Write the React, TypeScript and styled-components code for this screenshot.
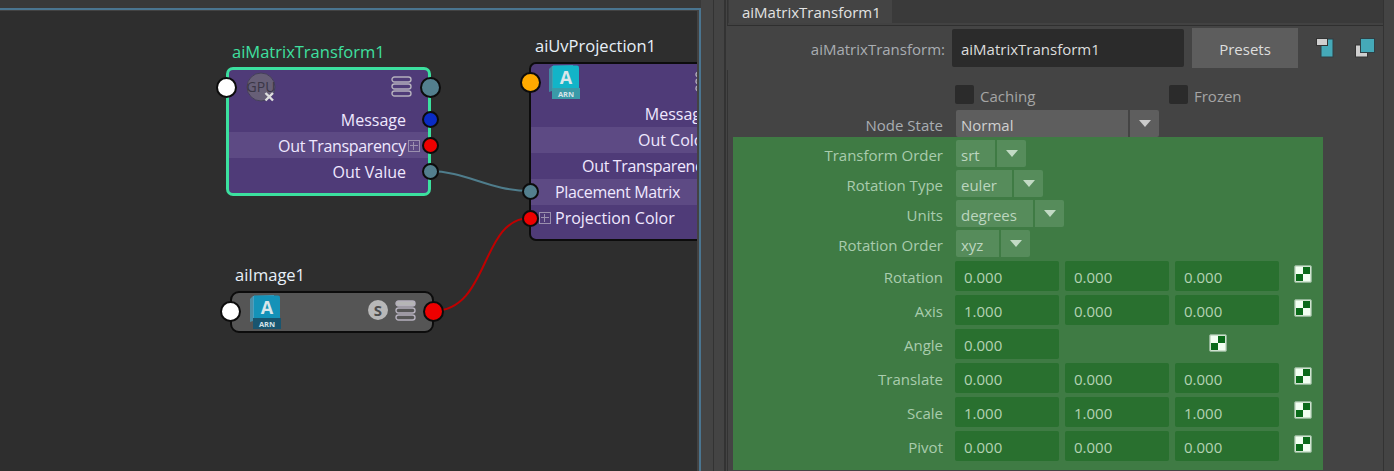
import React from 'react';
import styled, { createGlobalStyle } from 'styled-components';

const GlobalStyle = createGlobalStyle`
  html, body {
    margin: 0;
    padding: 0;
    background: #444444;
  }
  body {
    font-family: "Open Sans", "Noto Sans", sans-serif;
  }
`;

const Page = styled.div`
  display: flex;
  width: 1394px;
  height: 471px;
  overflow: hidden;
  background: #444444;
`;

/* node editor */

const GraphPane = styled.div`
  display: flex;
  flex-direction: column;
  width: 701px;
  flex-shrink: 0;
  background: #393939;
  padding-top: 8px;
  box-sizing: border-box;
`;

const GraphFrame = styled.div`
  flex: 1;
  border-top: 2px solid #4a7590;
  border-right: 2px solid #4a7590;
  min-height: 0;
  display: flex;
`;

const Canvas = styled.div`
  position: relative;
  flex: 1;
  overflow: hidden;
  background: #2e2e2e;
  border-top: 1px solid #434343;
  border-right: 2px solid #434343;
`;

const Wires = styled.svg`
  position: absolute;
  inset: 0;
  width: 100%;
  height: 100%;
  z-index: 2;
  pointer-events: none;
`;

const NodeTitle = styled.div<{ $x: number; $y: number; $selected?: boolean }>`
  position: absolute;
  left: ${(p) => p.$x}px;
  top: ${(p) => p.$y}px;
  font-size: 16.5px;
  line-height: 22px;
  white-space: nowrap;
  color: ${(p) => (p.$selected ? '#3fe0a0' : '#e8f0f8')};
`;

const Node = styled.div<{ $x: number; $y: number; $w: number; $h: number; $selected?: boolean; $grey?: boolean }>`
  position: absolute;
  left: ${(p) => p.$x}px;
  top: ${(p) => p.$y}px;
  width: ${(p) => p.$w}px;
  height: ${(p) => p.$h}px;
  box-sizing: border-box;
  border: ${(p) => (p.$selected ? '3px solid #3ce09f' : '2px solid #0c0c0c')};
  border-radius: ${(p) => (p.$grey ? '9px' : '7px')};
  background: ${(p) => (p.$grey ? '#555555' : '#4f3b78')};
  overflow: hidden;
`;

const NodeHeader = styled.div<{ $h: number }>`
  height: ${(p) => p.$h}px;
`;

const NodeRow = styled.div<{ $alt?: boolean; $left?: boolean; $pad: number; $low?: boolean; $tight?: boolean }>`
  display: flex;
  align-items: center;
  justify-content: ${(p) => (p.$left ? 'flex-start' : 'flex-end')};
  height: 26px;
  box-sizing: border-box;
  padding: ${(p) => (p.$left ? `0 0 0 ${p.$pad}px` : `0 ${p.$pad}px 0 0`)};
  padding-top: ${(p) => (p.$low ? '2px' : '0')};
  font-size: 16px;
  letter-spacing: ${(p) => (p.$tight ? '-0.35px' : '0')};
  white-space: nowrap;
  color: #efe8ff;
  background: ${(p) => (p.$alt ? '#5d4a84' : 'transparent')};
`;

const Port = styled.div<{ $cx: number; $cy: number; $size: number; $color: string }>`
  position: absolute;
  left: ${(p) => p.$cx - p.$size / 2}px;
  top: ${(p) => p.$cy - p.$size / 2}px;
  width: ${(p) => p.$size}px;
  height: ${(p) => p.$size}px;
  box-sizing: border-box;
  border: 2px solid #0c0c0c;
  border-radius: 50%;
  background: ${(p) => p.$color};
  z-index: 3;
`;

const ExpandBox = styled.span<{ $before?: boolean }>`
  display: inline-block;
  position: relative;
  width: 12px;
  height: 12px;
  box-sizing: border-box;
  border: 1px solid #9a8fae;
  flex-shrink: 0;
  margin: ${(p) => (p.$before ? '0 4px 0 0' : '0 0 0 2px')};
  &::before {
    content: '';
    position: absolute;
    left: 1px;
    right: 1px;
    top: 4px;
    height: 1px;
    background: #9a8fae;
  }
  &::after {
    content: '';
    position: absolute;
    top: 1px;
    bottom: 1px;
    left: 4px;
    width: 1px;
    background: #9a8fae;
  }
`;

const IconSlot = styled.div<{ $x: number; $y: number }>`
  position: absolute;
  left: ${(p) => p.$x}px;
  top: ${(p) => p.$y}px;
  display: flex;
  z-index: 1;
`;

const StackIcon = ({ filled }: { filled?: boolean }) => (
  <svg width="21" height="21" viewBox="0 0 21 21">
    <rect x="1" y="1" width="19" height="5" rx="2.5" fill={filled ? '#b5b5b5' : 'none'} stroke="#b5b0bd" strokeWidth="1.4" />
    <rect x="1" y="8" width="19" height="5" rx="2.5" fill="none" stroke="#b5b0bd" strokeWidth="1.4" />
    <rect x="1" y="15" width="19" height="5" rx="2.5" fill="none" stroke="#b5b0bd" strokeWidth="1.4" />
  </svg>
);

const GpuIcon = () => (
  <svg width="32" height="32" viewBox="0 0 32 32">
    <circle cx="15" cy="15" r="14" fill="#675f77" stroke="#45405a" strokeWidth="1" />
    <text x="15" y="20" textAnchor="middle" fontSize="14" fontFamily="Open Sans" fill="#3a3646">
      GPU
    </text>
    <path d="M19.5 21l7.5 7.5M27 21l-7.5 7.5" stroke="#dedede" strokeWidth="2.4" />
  </svg>
);

const ArnoldIcon = ({ front, back, band }: { front: string; back: string; band: string }) => (
  <svg width="32" height="35" viewBox="0 0 32 35">
    <path d="M3 1L24 0V26H3Z" fill={back} />
    <path d="M0 4L3 1V26L0 27Z" fill={back} opacity="0.75" />
    <path d="M4 0.5H28a2 2 0 0 1 2 2V23H4Z" fill={front} />
    <rect x="3" y="23" width="28" height="11" fill={band} />
    <text x="17" y="19" textAnchor="middle" fontSize="18" fontWeight="700" fontFamily="Open Sans" fill="#d9e6ea">
      A
    </text>
    <text x="17" y="32" textAnchor="middle" fontSize="7.5" fontWeight="700" fontFamily="Open Sans" fill="#d5e3e8">
      ARN
    </text>
  </svg>
);

const SwatchBadge = styled.div`
  width: 20px;
  height: 20px;
  border-radius: 50%;
  background: #b8b8b8;
  color: #4c4c4c;
  font-size: 15px;
  font-weight: 700;
  line-height: 20px;
  text-align: center;
`;

/* attribute editor */

const EditorPane = styled.div`
  flex: 1;
  min-width: 0;
  padding-left: 12px;
`;

const RuleOuter = styled.div`
  height: 100%;
  box-sizing: border-box;
  border-left: 1px solid #333333;
  padding-left: 10px;
`;

const RuleInner = styled.div`
  height: 100%;
  width: 660px;
  box-sizing: border-box;
  border-left: 2px solid #333333;
  border-right: 1px solid #333333;
  padding-left: 1px;
  display: flex;
  flex-direction: column;
`;

const TabBar = styled.div`
  height: 26px;
  box-sizing: border-box;
  border-left: 1px solid #333333;
  border-bottom: 1px solid #2f2f2f;
  padding-left: 1px;
  background: linear-gradient(#3a3a3a 0 23px, #424242 23px);
  flex-shrink: 0;
`;

const Tab = styled.div`
  width: 163px;
  height: 23px;
  box-sizing: border-box;
  padding-left: 13px;
  background: #444444;
  font-size: 15px;
  line-height: 25px;
  color: #e2e2e2;
`;

const NameRow = styled.div`
  display: flex;
  align-items: center;
  height: 40px;
  margin-top: 2px;
  flex-shrink: 0;
`;

const NameLabel = styled.div`
  width: 218px;
  padding-top: 2px;
  text-align: right;
  font-size: 15px;
  color: #a9adb2;
  margin-right: 7px;
`;

const NameField = styled.div`
  width: 232px;
  height: 38px;
  box-sizing: border-box;
  padding-left: 9px;
  background: #2b2b2b;
  border-radius: 2px;
  font-size: 15px;
  line-height: 40px;
  color: #dddddd;
`;

const PresetsButton = styled.div`
  width: 106px;
  height: 40px;
  margin-left: 8px;
  background: #5d5d5d;
  font-size: 15px;
  line-height: 42px;
  text-align: center;
  color: #dedede;
`;

const CopyIcon = styled.div<{ $gap: number }>`
  display: flex;
  margin-left: ${(p) => p.$gap}px;
`;

const Form = styled.div`
  flex: 1;
  min-height: 0;
  margin-top: 2px;
  border-left: 1px solid #333333;
  padding: 15px 0 0 5px;
`;

const CheckRow = styled.div`
  display: flex;
  align-items: center;
  height: 19px;
  padding-left: 222px;
`;

const CheckItem = styled.div<{ $width: number }>`
  display: flex;
  align-items: center;
  width: ${(p) => p.$width}px;
  font-size: 15px;
  color: #a5a5a5;
`;

const CheckLabel = styled.span`
  padding-top: 3px;
`;

const CheckBox = styled.div`
  width: 19px;
  height: 19px;
  margin-right: 6px;
  background: #2b2b2b;
  border-radius: 2px;
`;

const FieldRow = styled.div<{ $h: number; $mt: number }>`
  display: flex;
  align-items: center;
  height: ${(p) => p.$h}px;
  margin-top: ${(p) => p.$mt}px;
`;

const RowLabel = styled.div<{ $keyed?: boolean; $drop?: number }>`
  width: 210px;
  padding-top: ${(p) => p.$drop ?? 3}px;
  text-align: right;
  font-size: 15px;
  white-space: nowrap;
  color: ${(p) => (p.$keyed ? '#a9ccad' : '#a9adb2')};
`;

const Dropdown = styled.div<{ $keyed?: boolean }>`
  display: flex;
  gap: 2px;
  height: 100%;
  margin-left: 13px;
  color: ${(p) => (p.$keyed ? '#bcd6bf' : '#d0d0d0')};
  font-size: 15px;
`;

const DropdownValue = styled.div<{ $w: number; $keyed?: boolean }>`
  width: ${(p) => p.$w}px;
  box-sizing: border-box;
  padding: 3px 0 0 5px;
  display: flex;
  align-items: center;
  border-radius: 2px 0 0 2px;
  background: ${(p) => (p.$keyed ? '#568c5b' : '#5e5e5e')};
`;

const DropdownArrow = styled.div<{ $keyed?: boolean }>`
  width: 29px;
  display: flex;
  align-items: center;
  justify-content: center;
  border-radius: 0 2px 2px 0;
  background: ${(p) => (p.$keyed ? '#568c5b' : '#5e5e5e')};
  &::after {
    content: '';
    border-left: 6.5px solid transparent;
    border-right: 6.5px solid transparent;
    border-top: 7px solid ${(p) => (p.$keyed ? '#c2dac4' : '#cccccc')};
  }
`;

const KeyedBlock = styled.div`
  width: 590px;
  height: 333px;
  box-sizing: border-box;
  padding-top: 3px;
  background: #3f7b44;
`;

const NumberFields = styled.div`
  display: flex;
  gap: 6px;
  margin-left: 12px;
  height: 100%;
`;

const NumberField = styled.div`
  width: 104px;
  height: 100%;
  box-sizing: border-box;
  padding-left: 9px;
  background: #29702f;
  border-radius: 2px;
  font-size: 15px;
  line-height: 33px;
  color: #b4d2b4;
`;

const MapButton = styled.div<{ $offset: number; $lift: number }>`
  display: grid;
  grid-template-columns: 7px 7px;
  grid-template-rows: 7px 7px;
  padding: 1px;
  margin-left: ${(p) => p.$offset}px;
  margin-top: ${(p) => -p.$lift}px;
  border: 1px solid #8fb394;
  border-radius: 2px;
  background: #cfe2cf;
  span:nth-child(1), span:nth-child(4) {
    background: #f2fff2;
  }
  span:nth-child(2), span:nth-child(3) {
    background: #0b6a1a;
  }
`;

const MapIcon = ({ offset = 15, lift = 4 }: { offset?: number; lift?: number }) => (
  <MapButton $offset={offset} $lift={lift}>
    <span />
    <span />
    <span />
    <span />
  </MapButton>
);

const dropdowns = [
  { label: 'Transform Order', value: 'srt', width: 39 },
  { label: 'Rotation Type', value: 'euler', width: 56 },
  { label: 'Units', value: 'degrees', width: 77 },
  { label: 'Rotation Order', value: 'xyz', width: 43 }
];

const vectors = [
  { label: 'Rotation', values: ['0.000', '0.000', '0.000'] },
  { label: 'Axis', values: ['1.000', '0.000', '0.000'] },
  { label: 'Angle', values: ['0.000'] },
  { label: 'Translate', values: ['0.000', '0.000', '0.000'] },
  { label: 'Scale', values: ['1.000', '1.000', '1.000'] },
  { label: 'Pivot', values: ['0.000', '0.000', '0.000'] }
];

const App = () => (
  <Page>
    <GlobalStyle />
    <GraphPane>
      <GraphFrame>
        <Canvas>
          <Wires>
            <path d="M430 160C465 160 490 180 530 180" fill="none" stroke="#4f7d8c" strokeWidth="2" />
            <path d="M433 300C490 300 480 207 530 207" fill="none" stroke="#c00000" strokeWidth="2" />
          </Wires>

          <NodeTitle $x={232} $y={30} $selected>
            aiMatrixTransform1
          </NodeTitle>
          <Node $x={226} $y={56} $w={205} $h={129} $selected>
            <NodeHeader $h={36} />
            <NodeRow $low $pad={22}>
              Message
            </NodeRow>
            <NodeRow $low $alt $tight $pad={8}>
              Out Transparency
              <ExpandBox />
            </NodeRow>
            <NodeRow $low $pad={22}>
              Out Value
            </NodeRow>
          </Node>
          <IconSlot $x={246} $y={61}>
            <GpuIcon />
          </IconSlot>
          <IconSlot $x={391} $y={65}>
            <StackIcon />
          </IconSlot>
          <Port $cx={226.5} $cy={76} $size={21} $color="#ffffff" />
          <Port $cx={430} $cy={76} $size={21} $color="#537f8e" />
          <Port $cx={430} $cy={108} $size={17} $color="#0a2cc4" />
          <Port $cx={430} $cy={134} $size={17} $color="#ee0000" />
          <Port $cx={430} $cy={160} $size={17} $color="#537f8e" />

          <NodeTitle $x={535} $y={24}>
            aiUvProjection1
          </NodeTitle>
          <Node $x={529} $y={51} $w={220} $h={179}>
            <NodeHeader $h={37} />
            <NodeRow $pad={37}>Message</NodeRow>
            <NodeRow $alt $pad={37}>
              Out Color
            </NodeRow>
            <NodeRow $tight $pad={37}>
              Out Transparency
            </NodeRow>
            <NodeRow $alt $left $tight $pad={24}>
              Placement Matrix
            </NodeRow>
            <NodeRow $left $pad={8}>
              <ExpandBox $before />
              Projection Color
            </NodeRow>
          </Node>
          <IconSlot $x={549} $y={54}>
            <ArnoldIcon front="#12b4c8" back="#3fa0b0" band="#3a9aa8" />
          </IconSlot>
          <IconSlot $x={695} $y={60}>
            <StackIcon />
          </IconSlot>
          <Port $cx={530} $cy={71} $size={21} $color="#ffaa00" />
          <Port $cx={530} $cy={180} $size={17} $color="#537f8e" />
          <Port $cx={530} $cy={207} $size={17} $color="#ee0000" />

          <NodeTitle $x={235} $y={253}>
            aiImage1
          </NodeTitle>
          <Node $x={230} $y={280} $w={204} $h={42} $grey />
          <IconSlot $x={250} $y={284}>
            <ArnoldIcon front="#1492b8" back="#4aa0c0" band="#19556f" />
          </IconSlot>
          <IconSlot $x={368} $y={289}>
            <SwatchBadge>S</SwatchBadge>
          </IconSlot>
          <IconSlot $x={395} $y={289}>
            <StackIcon filled />
          </IconSlot>
          <Port $cx={230.5} $cy={300} $size={21} $color="#ffffff" />
          <Port $cx={433} $cy={300} $size={21} $color="#ee0000" />
        </Canvas>
      </GraphFrame>
    </GraphPane>

    <EditorPane>
      <RuleOuter>
        <RuleInner>
          <TabBar>
            <Tab>aiMatrixTransform1</Tab>
          </TabBar>
          <NameRow>
            <NameLabel>aiMatrixTransform:</NameLabel>
            <NameField>aiMatrixTransform1</NameField>
            <PresetsButton>Presets</PresetsButton>
            <CopyIcon $gap={18}>
              <svg width="18" height="20" viewBox="0 0 18 20">
                <rect x="5" y="1" width="12" height="18" fill="#45a9b8" stroke="#2f3f44" />
                <rect x="0.5" y="0.5" width="11" height="7" fill="#cfcfcf" stroke="#333" />
              </svg>
            </CopyIcon>
            <CopyIcon $gap={21}>
              <svg width="20" height="20" viewBox="0 0 20 20">
                <rect x="0.5" y="7" width="12" height="12" fill="#cfcfcf" stroke="#333" />
                <rect x="5.5" y="0.5" width="14" height="14" fill="#45a9b8" stroke="#2f3f44" />
              </svg>
            </CopyIcon>
          </NameRow>
          <Form>
            <CheckRow>
              <CheckItem $width={214}>
                <CheckBox />
                <CheckLabel>Caching</CheckLabel>
              </CheckItem>
              <CheckItem $width={100}>
                <CheckBox />
                <CheckLabel>Frozen</CheckLabel>
              </CheckItem>
            </CheckRow>
            <FieldRow $h={27} $mt={6}>
              <RowLabel>Node State</RowLabel>
              <Dropdown>
                <DropdownValue $w={172}>Normal</DropdownValue>
                <DropdownArrow />
              </Dropdown>
            </FieldRow>
            <KeyedBlock>
              {dropdowns.map((item, i) => (
                <FieldRow key={item.label} $h={27} $mt={i === 0 ? 0 : 3}>
                  <RowLabel $keyed>{item.label}</RowLabel>
                  <Dropdown $keyed>
                    <DropdownValue $w={item.width} $keyed>
                      {item.value}
                    </DropdownValue>
                    <DropdownArrow $keyed />
                  </Dropdown>
                </FieldRow>
              ))}
              {vectors.map((item) => (
                <FieldRow key={item.label} $h={30} $mt={4}>
                  <RowLabel $keyed $drop={1}>
                    {item.label}
                  </RowLabel>
                  <NumberFields>
                    {item.values.map((value, i) => (
                      <NumberField key={i}>{value}</NumberField>
                    ))}
                  </NumberFields>
                  {item.values.length === 1 ? <MapIcon offset={150} lift={3} /> : <MapIcon />}
                </FieldRow>
              ))}
            </KeyedBlock>
          </Form>
        </RuleInner>
      </RuleOuter>
    </EditorPane>
  </Page>
);

export default App;
